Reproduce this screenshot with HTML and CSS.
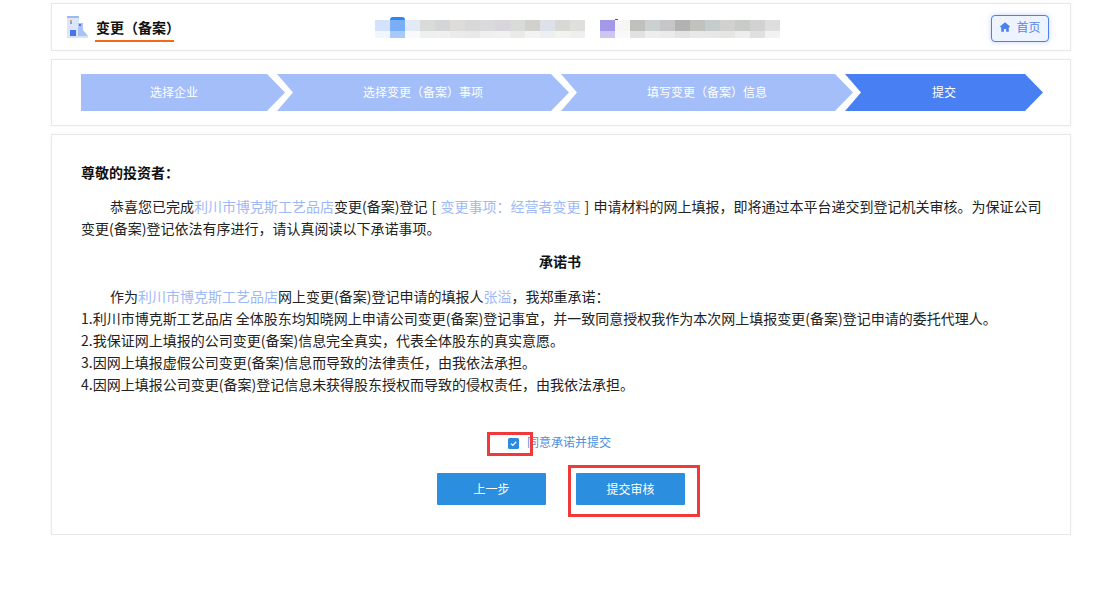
FILE: index.html
```html
<!DOCTYPE html>
<html lang="zh-CN">
<head>
<meta charset="utf-8">
<title>变更（备案）</title>
<link rel="stylesheet" href="styles.css">
</head>
<body>
<div class="page">
  <header class="card top">
    <svg class="logo" viewBox="0 0 21 22" width="21" height="22" aria-hidden="true">
      <rect x="0" y="0" width="12" height="21" fill="#dbe6fb"/>
      <rect x="0" y="0" width="12" height="2" fill="#9db8f3"/>
      <rect x="3" y="4" width="2" height="2" fill="#f0a060"/>
      <rect x="3" y="6" width="2" height="2" fill="#7da2ee"/>
      <path d="M11 7H16V14L21 20V21H11Z" fill="#a9c3f6"/>
      <rect x="3" y="14" width="6" height="6" fill="#4a74ea"/>
      <rect x="12" y="8" width="2" height="2" fill="#4a74ea"/>
      <rect x="0" y="20" width="21" height="2" fill="#d6e3fb"/>
    </svg>
    <h1 class="title">变更（备案）</h1>
    <div class="blur" aria-hidden="true"><span class="cap cap-a"></span><span class="cap cap-b"></span></div>
    <a class="home">
      <svg viewBox="0 0 12 12" width="12" height="12" aria-hidden="true"><path d="M6 1.2 1 5.6 1.6 6.5 2.2 6V10.8H4.9V8H7.1V10.8H9.8V6L10.4 6.5 11 5.6Z" fill="#4a80f0"/></svg>
      <span>首页</span>
    </a>
  </header>

  <nav class="card steps">
    <div class="step s1">选择企业</div>
    <div class="step s2">选择变更（备案）事项</div>
    <div class="step s3">填写变更（备案）信息</div>
    <div class="step s4 now">提交</div>
  </nav>

  <main class="card content">
    <h2 class="hello">尊敬的投资者：</h2>
    <p class="para indent spaced">恭喜您已完成<span class="hl">利川市博克斯工艺品店</span>变更(备案)登记 [ <span class="hl">变更事项：经营者变更</span> ] 申请材料的网上填报，即将通过本平台递交到登记机关审核。为保证公司变更(备案)登记依法有序进行，请认真阅读以下承诺事项。</p>
    <h3 class="pledge">承诺书</h3>
    <p class="para indent">作为<span class="hl">利川市博克斯工艺品店</span>网上变更(备案)登记申请的填报人<span class="hl">张溢</span>，我郑重承诺：</p>
    <p class="para">1.利川市博克斯工艺品店 全体股东均知晓网上申请公司变更(备案)登记事宜，并一致同意授权我作为本次网上填报变更(备案)登记申请的委托代理人。</p>
    <p class="para">2.我保证网上填报的公司变更(备案)信息完全真实，代表全体股东的真实意愿。</p>
    <p class="para">3.因网上填报虚假公司变更(备案)信息而导致的法律责任，由我依法承担。</p>
    <p class="para">4.因网上填报公司变更(备案)登记信息未获得股东授权而导致的侵权责任，由我依法承担。</p>

    <div class="agree">
      <span class="check">
        <svg viewBox="0 0 11 11" width="11" height="11" aria-hidden="true"><rect width="11" height="11" rx="1.5" fill="#2b8bdf"/><path d="M3 5.6 4.8 7.4 8.2 3.8" fill="none" stroke="#fff" stroke-width="1.3"/></svg>
        <span class="mark mark-check"></span>
      </span>
      <span class="agree-label">同意承诺并提交</span>
    </div>

    <div class="actions">
      <button class="btn" type="button">上一步</button>
      <span class="submit-wrap">
        <button class="btn" type="button">提交审核</button>
        <span class="mark mark-submit"></span>
      </span>
    </div>
  </main>
</div>
</body>
</html>
```
FILE: styles.css
```css
* { box-sizing: border-box; }
html, body { margin: 0; padding: 0; background: #fff; }
body {
  font-family: "Noto Sans CJK SC", "Liberation Sans", sans-serif;
  font-size: 14px;
  color: #222;
}
.page {
  width: 1020px;
  margin-left: 51px;
  padding-top: 3px;
  display: flex;
  flex-direction: column;
  gap: 8px;
}
.card {
  background: #fff;
  border: 1px solid #e8e8e8;
  box-shadow: 0 0 4px rgba(0, 0, 0, .04);
}

/* header */
.top {
  height: 48px;
  display: flex;
  align-items: center;
  padding-left: 15px;
  padding-right: 21px;
}
.logo { flex: none; align-self: flex-start; margin-top: 12px; }
.title {
  flex: none;
  align-self: flex-start;
  width: 79px;
  height: 28px;
  margin: 10px 0 0 7px;
  padding: 3px 0 0 1px;
  font-size: 14px;
  line-height: 20px;
  font-weight: 700;
  color: #111;
  white-space: nowrap;
  border-bottom: 2px solid #f5671a;
}
.blur {
  position: relative;
  flex: none;
  width: 405px;
  height: 18px;
  margin-left: 201px;
  margin-top: 4px;
  background:
    linear-gradient(90deg, #d4e3fb 0 15px, #7aaff5 0 30px, #e2eaf5 0 45px, #d8dbd8 0 60px, #d4d5d8 0 75px, #dedcda 0 90px, #d8d8d8 0 105px, #dadadc 0 120px, #d8d6da 0 135px, #d9dbd8 0 150px, #d2d0ca 0 165px, #dee2e8 0 180px, #d8d8d5 0 195px, #dfdfdd 0 210px, #fff 0 225px, #a498e8 0 240px, #f7f6f5 0 255px, #c0c0bd 0 270px, #cbd0d0 0 285px, #c6c6c8 0 300px, #b2b2b2 0 315px, #c1c1be 0 330px, #c6cbcb 0 345px, #d1d1cf 0 360px, #c9cbc9 0 375px, #d2d2d2 0 390px, #dedede 0 405px) top / 405px 11px no-repeat,
    linear-gradient(90deg, #f2f6fe 0 15px, #a8caf8 0 30px, #f8fafc 0 45px, #eef0ef 0 60px, #f0f0f1 0 75px, #ecebe9 0 90px, #e9e9e9 0 105px, #efefef 0 120px, #f1f1f1 0 135px, #eaeae8 0 150px, #f4f3f1 0 165px, #edf0f3 0 180px, #f4f3f0 0 195px, #efefee 0 210px, #fff 0 225px, #cec5f2 0 240px, #f8f9fb 0 255px, #e2e3e1 0 270px, #edefef 0 285px, #ebebeb 0 300px, #e4e4e4 0 315px, #e8e9e8 0 330px, #e7e9e8 0 345px, #e5e5e4 0 360px, #eeeeec 0 375px, #dfe1e0 0 390px, #f2f2f2 0 405px) bottom / 405px 7px no-repeat;
}
.cap { position: absolute; top: -3px; height: 3px; }
.cap-a { left: 15px; width: 15px; background: #2f86f0; border-radius: 7px 7px 0 0; }
.cap-b { left: 240px; width: 3px; top: -1px; height: 1px; background: #5a40e0; }
.home {
  margin-left: auto;
  flex: none;
  width: 58px;
  height: 27px;
  margin-top: 2px;
  display: flex;
  align-items: center;
  justify-content: center;
  gap: 5px;
  line-height: 24px;
  padding-bottom: 2px;
  font-size: 12px;
  color: #5b84e8;
  background: #edf3ff;
  border: 1px solid #4a80f0;
  border-radius: 4px;
  box-shadow: 0 0 5px rgba(74, 128, 240, .35);
}

/* steps */
.steps {
  height: 67px;
  display: flex;
  align-items: center;
  padding-left: 29px;
}
.step {
  flex: none;
  height: 37px;
  line-height: 35px;
  margin-left: -8px;
  text-align: center;
  font-size: 12px;
  color: #fff;
  background: #a3bef9;
  clip-path: polygon(0 0, calc(100% - 18px) 0, 100% 50%, calc(100% - 18px) 100%, 0 100%, 16px 50%);
}
.s1 { width: 204px; margin-left: 0; clip-path: polygon(0 0, calc(100% - 18px) 0, 100% 50%, calc(100% - 18px) 100%, 0 100%); padding-right: 18px; }
.s2 { width: 292px; }
.s3 { width: 292px; }
.s4 { width: 198px; }
.now { background: #4880f3; }

/* content */
.content {
  height: 401px;
  padding: 26px 29px 0;
}
.hello {
  margin: 0 0 12px;
  font-size: 14px;
  line-height: 22px;
  font-weight: 700;
  color: #111;
}
.para { margin: 0; line-height: 22px; }
.indent { text-indent: 29px; }
.spaced { word-spacing: 1px; margin-right: -4px; }
.hl { color: #9db9f6; }
.pledge {
  margin: 11px 0 13px;
  padding-right: 2px;
  font-size: 14px;
  line-height: 22px;
  font-weight: 700;
  text-align: center;
  color: #111;
}
.agree {
  display: flex;
  align-items: center;
  justify-content: center;
  gap: 8px;
  height: 24px;
  margin-top: 34px;
  padding-right: 5px;
}
.check { position: relative; display: flex; margin-top: 4px; margin-left: 2px; }
.agree-label { font-size: 12px; color: #4a8fe0; }
.actions {
  display: flex;
  justify-content: center;
  gap: 30px;
  margin-top: 20px;
}
.submit-wrap { position: relative; display: flex; }
.btn {
  width: 109px;
  height: 32px;
  padding: 0 0 2px;
  border: 0;
  border-radius: 1px;
  background: #2b8ede;
  color: #fff;
  font-family: inherit;
  font-size: 12px;
}
.mark { position: absolute; border: 3px solid #f03a3a; pointer-events: none; }
.mark-check { left: -21px; top: -6px; width: 46px; height: 24px; }
.mark-submit { left: -8px; top: -8px; width: 132px; height: 52px; }
```
